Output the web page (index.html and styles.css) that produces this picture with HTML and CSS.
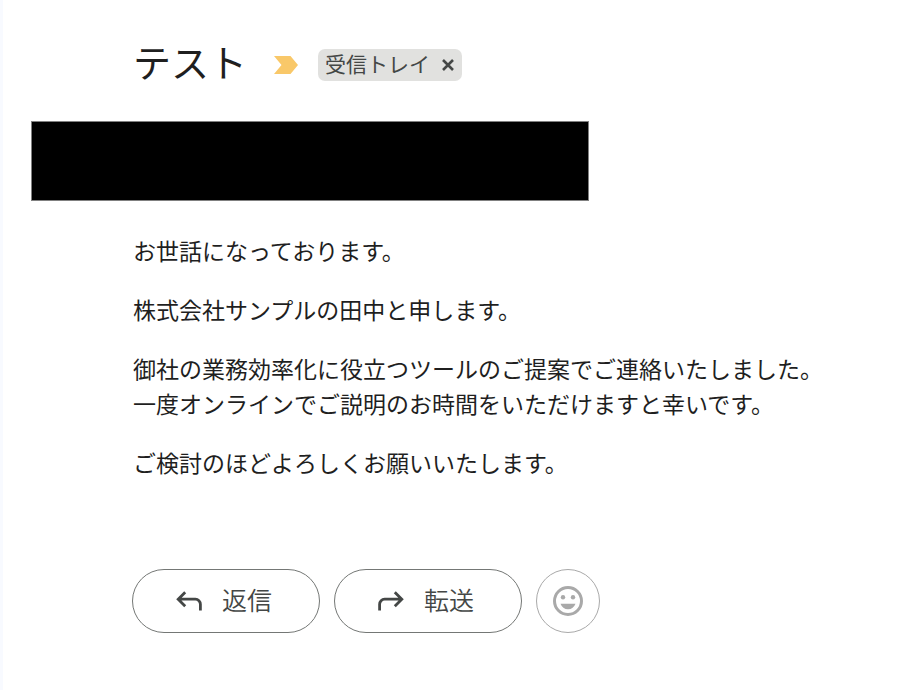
FILE: index.html
```html
<!DOCTYPE html>
<html lang="ja">
  <head>
    <meta charset="UTF-8" />
    <meta name="viewport" content="width=device-width, initial-scale=1.0" />
    <title>テスト</title>
    <link rel="stylesheet" href="styles.css">
  </head>
  <body>
    <main class="mail">
      <header class="mail-header">
        <h1>テスト</h1>
        <svg class="important" viewBox="0 0 24 18" aria-hidden="true">
          <path d="M0 0h16.5L24 9l-7.5 9H0l7.5-9z" fill="#f9c869" />
        </svg>
        <div class="label">
          <span>受信トレイ</span>
          <button class="label-remove" aria-label="ラベルを削除">
            <svg viewBox="0 0 12 12" aria-hidden="true">
              <path d="M1 1l10 10M11 1L1 11" fill="none" stroke="#444746" stroke-width="2.6" />
            </svg>
          </button>
        </div>
      </header>

      <!-- 送信者情報（非表示） -->
      <div class="sender"></div>

      <div class="mail-body">
        <p>お世話になっております。</p>
        <p>株式会社サンプルの田中と申します。</p>
        <p>
          御社の業務効率化に役立つツールのご提案でご連絡いたしました。<br />
          一度オンラインでご説明のお時間をいただけますと幸いです。
        </p>
        <p>ご検討のほどよろしくお願いいたします。</p>
      </div>

      <div class="actions">
        <button class="action">
          <svg viewBox="0 0 26 20" aria-hidden="true">
            <path d="M9.2 1.2L2.2 8.2l7 7M2.400 8.200h17a5 5 0 0 1 5 5V19.500" fill="none" stroke="#444746" stroke-width="2.800" />
          </svg>
          <span>返信</span>
        </button>
        <button class="action">
          <svg viewBox="0 0 26 20" aria-hidden="true">
            <path d="M16.800 1.200l7 7-7 7M23.600 8.200h-17a5 5 0 0 0-5 5V19.500" fill="none" stroke="#444746" stroke-width="2.800" />
          </svg>
          <span>転送</span>
        </button>
        <button class="reaction" aria-label="リアクションを追加">
          <svg viewBox="0 0 30 30" aria-hidden="true">
            <circle cx="15" cy="15" r="13.5" fill="none" stroke="#a9a9a9" stroke-width="3" />
            <circle cx="10" cy="11.2" r="2.2" fill="#a9a9a9" />
            <circle cx="20" cy="11.2" r="2.2" fill="#a9a9a9" />
            <path d="M7.500 17.800h15c-1.200 3.500-4 5.500-7.500 5.500s-6.300-2-7.500-5.500z" fill="#a9a9a9" />
          </svg>
        </button>
      </div>
    </main>
  </body>
</html>
```

FILE: styles.css
```css
* {
  box-sizing: border-box;
}
body {
  margin: 0;
  min-height: 100vh;
  border-left: 3px solid #f8faff;
  background-color: #fff;
  color: #1f1f1f;
  font-family: "Noto Sans CJK JP", sans-serif;
}
button {
  padding: 0;
  border: none;
  background: none;
  color: #444746;
  font-family: inherit;
  cursor: pointer;
}
.mail {
  padding: 36px 28px;
}
.mail-header {
  display: flex;
  align-items: center;
  margin-left: 102px;
  height: 58px;
}
h1 {
  margin: 0;
  padding-bottom: 8px;
  font-size: 38px;
  font-weight: 400;
  line-height: 50px;
}
.important {
  width: 24px;
  height: 18px;
  margin: 0 20px 0 27px;
}
.label {
  display: flex;
  align-items: center;
  gap: 12px;
  height: 32px;
  padding: 0 8px 0 7px;
  border-radius: 7px;
  background-color: #e1e1df;
  color: #444746;
  font-size: 21px;
  line-height: 28px;
}
.label span {
  padding-bottom: 4px;
}
.label-remove {
  display: flex;
}
.label-remove svg {
  width: 12px;
  height: 12px;
}
.sender {
  max-width: 558px;
  height: 80px;
  margin-top: 27px;
  border: 1px solid #808080;
  background-color: #000;
}
.mail-body {
  margin: 32px 0 0 102px;
  font-size: 23px;
  line-height: 35px;
}
.mail-body p {
  margin: 0 0 24px;
}
.actions {
  display: flex;
  gap: 14px;
  margin: 89px 0 0 101px;
}
.action {
  display: flex;
  align-items: center;
  gap: 20px;
  height: 64px;
  padding: 0 47px 0 43px;
  border: 1px solid #747775;
  border-radius: 32px;
  font-size: 25px;
  font-weight: 350;
  line-height: 36px;
}
.action span {
  padding-bottom: 4px;
}
.action svg {
  width: 26px;
  height: 20px;
}
.reaction {
  display: flex;
  align-items: center;
  justify-content: center;
  width: 64px;
  height: 64px;
  border: 1px solid #a9a9a9;
  border-radius: 50%;
}
.reaction svg {
  width: 30px;
  height: 30px;
}
```
